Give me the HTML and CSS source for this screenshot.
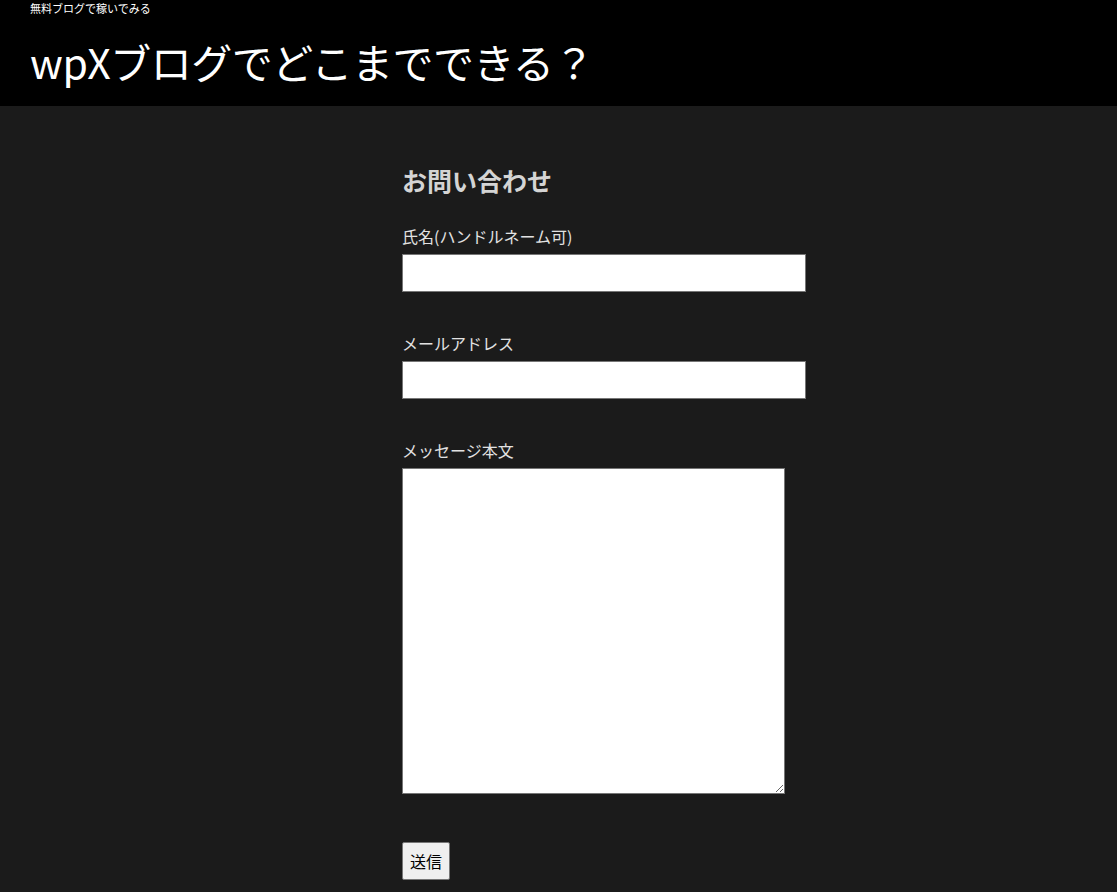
FILE: index.html
```html
<!DOCTYPE html>
<html lang="ja">
<head>
  <meta charset="UTF-8" />
  <meta name="viewport" content="width=device-width, initial-scale=1" />
  <title>お問い合わせ – wpXブログでどこまでできる？</title>
  <link rel="stylesheet" href="styles.css">
</head>
<body>
  <header class="site-header">
    <div class="tagline">無料ブログで稼いでみる</div>
    <div class="site-title">wpXブログでどこまでできる？</div>
  </header>

  <main class="content">
    <h2>お問い合わせ</h2>
    <form class="contact">
      <label class="field">
        <span>氏名(ハンドルネーム可)</span>
        <input type="text" name="name" />
      </label>
      <label class="field">
        <span>メールアドレス</span>
        <input type="email" name="email" />
      </label>
      <label class="field">
        <span>メッセージ本文</span>
        <textarea name="message"></textarea>
      </label>
      <button type="button" class="btn">送信</button>
    </form>
  </main>
</body>
</html>
```

FILE: styles.css
```css
body {
  font-family: "Noto Sans CJK JP", "Noto Sans", sans-serif;
  background: #1b1b1b;
  margin: 0;
}

.site-header {
  background: #000;
  color: #fff;
  height: 106px;
  padding: 0 30px;
  box-sizing: border-box;
}

.tagline {
  font-size: 11px;
  line-height: 17px;
}

.site-title {
  font-size: 41px;
  line-height: 60px;
  margin-top: 14px;
  letter-spacing: -0.5px;
}

.content {
  width: 404px;
  margin-left: 402px;
  padding: 56px 0 40px;
}

h2 {
  font-size: 25px;
  font-weight: 700;
  line-height: 36px;
  color: #d4d4d4;
  margin: 0 0 26px;
}

.field {
  display: block;
  margin-bottom: 39px;
  font-size: 16px;
  line-height: 24px;
  color: #e2e2e2;
}

.field span {
  display: block;
  margin-bottom: 6px;
}

.field input,
.field textarea {
  display: block;
  box-sizing: border-box;
  background: #fff;
  border: 1px solid #767676;
  margin: 0;
  font-size: 16px;
}

.field input {
  width: 404px;
  height: 38px;
}

.field textarea {
  width: 383px;
  height: 326px;
}

.contact .field:nth-of-type(3) {
  margin-bottom: 48px;
}

.btn {
  width: 48px;
  height: 38px;
  padding: 0;
  background: #efefef;
  border: 1px solid #767676;
  border-radius: 2px;
  font-family: inherit;
  font-size: 16px;
  color: #000;
}
```
